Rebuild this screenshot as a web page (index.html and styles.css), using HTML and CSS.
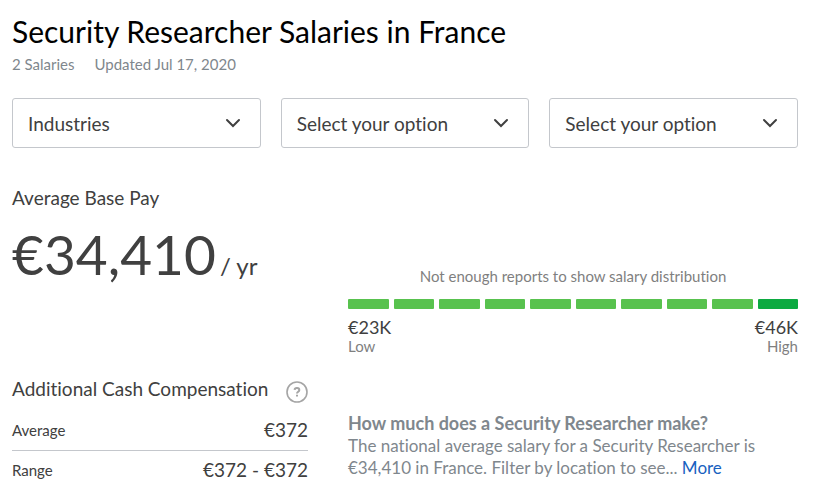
FILE: index.html
```html
<!DOCTYPE html>
<html lang="en">
<head>
  <meta charset="UTF-8" />
  <title>Security Researcher Salaries in France</title>
  <meta name="viewport" content="width=device-width, initial-scale=1" />
  <link rel="stylesheet" href="styles.css">
</head>
<body>
  <header class="page-header">
    <h1>Security Researcher Salaries in France</h1>
    <div class="meta">
      <span>2 Salaries</span>
      <span>Updated Jul 17, 2020</span>
    </div>
  </header>

  <form class="filters">
    <div class="filter">
      <select aria-label="Industries">
        <option>Industries</option>
      </select>
      <svg class="chevron" viewBox="0 0 16 10" aria-hidden="true"><path d="M2 2 L8 8 L14 2" /></svg>
    </div>
    <div class="filter">
      <select aria-label="Company size">
        <option>Select your option</option>
      </select>
      <svg class="chevron" viewBox="0 0 16 10" aria-hidden="true"><path d="M2 2 L8 8 L14 2" /></svg>
    </div>
    <div class="filter">
      <select aria-label="Experience">
        <option>Select your option</option>
      </select>
      <svg class="chevron" viewBox="0 0 16 10" aria-hidden="true"><path d="M2 2 L8 8 L14 2" /></svg>
    </div>
  </form>

  <main class="salary">
    <section class="base-pay">
      <h2>Average Base Pay</h2>
      <p class="amount">€34,410<span class="period">/ yr</span></p>
    </section>

    <section class="distribution">
      <p class="notice">Not enough reports to show salary distribution</p>
      <div class="bars">
        <span class="bar"></span>
        <span class="bar"></span>
        <span class="bar"></span>
        <span class="bar"></span>
        <span class="bar"></span>
        <span class="bar"></span>
        <span class="bar"></span>
        <span class="bar"></span>
        <span class="bar"></span>
        <span class="bar bar-high"></span>
      </div>
      <div class="range">
        <div>
          <div class="range-value">€23K</div>
          <div class="range-label">Low</div>
        </div>
        <div class="range-end">
          <div class="range-value">€46K</div>
          <div class="range-label">High</div>
        </div>
      </div>
    </section>

    <section class="cash">
      <div class="cash-header">
        <h2>Additional Cash Compensation</h2>
        <button type="button" class="help" aria-label="Help">
          <svg viewBox="0 0 22 22" aria-hidden="true">
            <circle cx="11" cy="11" r="10" />
            <path d="M8.6 8.8 C8.8 6.4 13.4 6.6 13.3 9.1 C13.2 10.8 11 10.8 11 12.6 M11 13.8 V15.4" />
          </svg>
        </button>
      </div>
      <table>
        <tr>
          <th scope="row">Average</th>
          <td>€372</td>
        </tr>
        <tr>
          <th scope="row">Range</th>
          <td>€372 - €372</td>
        </tr>
      </table>
    </section>

    <section class="about">
      <h3>How much does a Security Researcher make?</h3>
      <p>The national average salary for a Security Researcher is €34,410 in France. Filter by location to see... <a href="#">More</a></p>
    </section>
  </main>
</body>
</html>
```

FILE: styles.css
```css
* {
  box-sizing: border-box;
}

body {
  background: #fff;
  color: #404040;
  font-family: Lato, sans-serif;
  font-size: 18px;
  font-variant-ligatures: none;
  line-height: 22px;
  margin: 0;
  padding: 12px 23px 0 12px;
}

h1, h2, h3, p {
  margin: 0;
  font-weight: normal;
}

h1 {
  color: #000;
  font-size: 30px;
  line-height: 38px;
}

h2 {
  font-size: 19px;
  line-height: 24px;
}

.meta {
  display: flex;
  gap: 20px;
  margin-top: 2px;
  color: #7f878d;
  font-size: 15px;
  line-height: 24px;
}

.filters {
  display: grid;
  grid-template-columns: repeat(3, 1fr);
  gap: 20px;
  margin-top: 22px;
}

.filter {
  position: relative;
}

.filter select {
  appearance: none;
  display: block;
  width: 100%;
  height: 50px;
  padding: 0 48px 0 15px;
  background: #fff;
  border: 1px solid #c4c7cc;
  border-radius: 3px;
  color: #404040;
  font-family: inherit;
  font-size: 19px;
  font-variant-ligatures: none;
}

.chevron {
  position: absolute;
  top: 20px;
  right: 20px;
  width: 16px;
  height: 10px;
  fill: none;
  stroke: #404040;
  stroke-width: 2;
  stroke-linecap: round;
  pointer-events: none;
}

.salary {
  display: grid;
  grid-template-columns: 296px 1fr;
  column-gap: 40px;
  row-gap: 22px;
  margin-top: 38px;
}

.amount {
  margin-top: 10px;
  font-size: 55px;
  line-height: 68px;
}

.period {
  margin-left: 4px;
  font-size: 24px;
}

.distribution {
  padding-top: 80px;
}

.notice {
  color: #7f7f7f;
  font-size: 15px;
  line-height: 20px;
  text-align: center;
}

.bars {
  display: flex;
  gap: 5px;
  margin-top: 13px;
}

.bar {
  flex: 1;
  height: 10px;
  background: #58c24e;
  border-radius: 1px;
}

.bar-high {
  background: #0caa41;
}

.range {
  display: flex;
  justify-content: space-between;
  margin-top: 8px;
}

.range-end {
  text-align: right;
}

.range-value {
  line-height: 20px;
}

.range-label {
  color: #7f7f7f;
  font-size: 15px;
  line-height: 18px;
}

.cash-header {
  display: flex;
  justify-content: space-between;
}

.help {
  width: 22px;
  height: 22px;
  margin-top: 4px;
  padding: 0;
  background: none;
  border: none;
  cursor: pointer;
}

.help svg {
  display: block;
  fill: none;
  stroke: #a5a5a5;
  stroke-width: 1.6;
}

.help path {
  stroke-width: 2;
}

table {
  width: 100%;
  margin-top: 8px;
  border-collapse: collapse;
}

th {
  padding: 0;
  font-size: 15px;
  font-weight: normal;
  text-align: left;
}

td {
  height: 39px;
  padding: 0;
  font-size: 19px;
  text-align: right;
}

tr + tr {
  border-top: 1px solid #c4c7cc;
}

.about {
  padding-top: 35px;
  color: #7f878d;
}

.about p {
  margin-top: 1px;
  font-size: 17px;
}

h3 {
  font-size: 18px;
  font-weight: bold;
}

a {
  color: #1861bf;
  text-decoration: none;
}
```
